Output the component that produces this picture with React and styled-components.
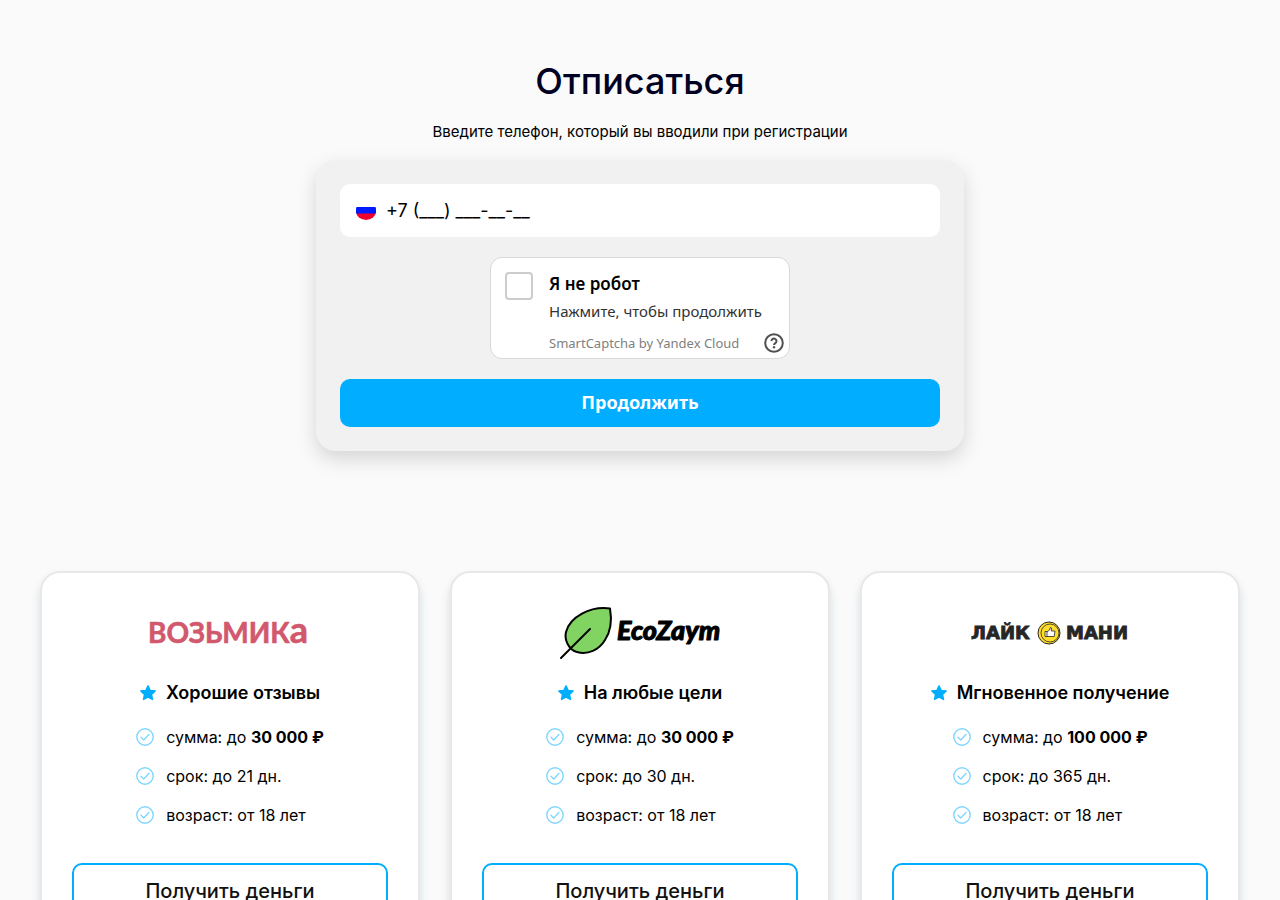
import React from 'react';
import styled, { createGlobalStyle } from 'styled-components';

const GlobalStyle = createGlobalStyle`
  * {
    box-sizing: border-box;
  }
  body {
    margin: 0;
    background: #fafafa;
    color: #000;
    font-family: Inter, "Liberation Sans", sans-serif;
  }
`;

const Page = styled.main`
  display: flex;
  flex-direction: column;
  align-items: center;
  padding: 56px 40px;
`;
const Title = styled.h1`
  margin: 0;
  font-size: 36px;
  line-height: 50px;
  font-weight: 500;
  color: #000022;
`;
const Subtitle = styled.p`
  margin: 16px 0 18px;
  font-size: 15px;
  line-height: 20px;
`;
const Form = styled.form`
  display: flex;
  flex-direction: column;
  align-items: center;
  gap: 20px;
  width: 100%;
  max-width: 648px;
  padding: 24px;
  border-radius: 20px;
  background: #f1f1f1;
  box-shadow: 0 8px 20px rgba(0, 0, 0, 0.15);
`;
const PhoneField = styled.label`
  display: flex;
  align-items: center;
  gap: 10px;
  width: 100%;
  height: 53px;
  padding: 0 16px;
  border-radius: 10px;
  background: #fff;
`;
const PhoneInput = styled.input`
  flex: 1;
  min-width: 0;
  padding: 0;
  border: 0;
  outline: 0;
  background: transparent;
  color: #000;
  font: 400 18px/24px Inter, sans-serif;
`;
const Captcha = styled.div`
  display: flex;
  gap: 16px;
  width: 300px;
  height: 102px;
  padding: 14px 5px 5px 14px;
  border: 1px solid #d9d9d9;
  border-radius: 12px;
  background: #fff;
  font-family: "Noto Sans", sans-serif;
`;
const CaptchaCheck = styled.input`
  appearance: none;
  flex: none;
  width: 28px;
  height: 28px;
  margin: 0;
  border: 2px solid #ccc;
  border-radius: 4px;
  background: #fff;
`;
const CaptchaBody = styled.div`
  flex: 1;
  display: flex;
  flex-direction: column;
`;
const CaptchaLabel = styled.label`
  font-size: 17px;
  line-height: 24px;
  font-weight: 600;
`;
const CaptchaHint = styled.span`
  margin-top: 5px;
  font-size: 15px;
  line-height: 20px;
  color: #333;
`;
const CaptchaFooter = styled.div`
  display: flex;
  align-items: center;
  justify-content: space-between;
  margin-top: auto;
`;
const CaptchaLink = styled.a`
  font-size: 13px;
  line-height: 20px;
  color: #808080;
  text-decoration: none;
`;
const HelpButton = styled.button`
  display: flex;
  padding: 0;
  border: 0;
  background: none;
`;
const SubmitButton = styled.button`
  width: 100%;
  height: 48px;
  padding: 0 0 2px;
  border: 0;
  border-radius: 10px;
  background: #00adff;
  color: #fff;
  font: 700 18px/24px "Noto Sans", sans-serif;
`;
const Offers = styled.section`
  display: grid;
  grid-template-columns: repeat(3, 1fr);
  gap: 30px;
  width: 100%;
  max-width: 1200px;
  margin-top: 120px;
`;
const Card = styled.article`
  display: flex;
  flex-direction: column;
  align-items: center;
  padding: 30px;
  border: 2px solid #e8e8e8;
  border-radius: 20px;
  background: #fff;
  box-shadow: 0 6px 10px rgba(20, 80, 110, 0.16);
`;
const Logo = styled.svg`
  display: block;
  width: 160px;
  height: 60px;
  overflow: visible;
`;
const CardTitle = styled.h2`
  display: flex;
  align-items: center;
  gap: 10px;
  margin: 18px 0 20px;
  font-size: 18px;
  line-height: 24px;
  font-weight: 600;
`;
const Features = styled.ul`
  display: grid;
  gap: 15px;
  margin: 0 0 36px;
  padding: 0;
  list-style: none;
`;
const Feature = styled.li`
  display: flex;
  align-items: center;
  gap: 12px;
  font-size: 16px;
  line-height: 24px;
`;
const CardButton = styled.a`
  width: 100%;
  padding: 12px;
  border: 2px solid #00adff;
  border-radius: 10px;
  color: #111;
  font-size: 20px;
  line-height: 28px;
  font-weight: 500;
  text-align: center;
  text-decoration: none;
`;

const Flag = () => (
  <svg width="20" height="20" viewBox="0 0 20 20" aria-hidden="true">
    <clipPath id="flag">
      <ellipse cx="10" cy="9.5" rx="10.2" ry="9.5" />
    </clipPath>
    <g clipPath="url(#flag)">
      <path fill="#fff" d="M0 0h20v7H0z" />
      <path fill="#001aff" d="M0 6h20v7H0z" />
      <path fill="#f0002c" d="M0 12.500h20v7.500H0z" />
    </g>
  </svg>
);

const HelpIcon = () => (
  <svg width="20" height="20" viewBox="0 0 20 20" fill="none" stroke="#505050" strokeWidth="2">
    <circle cx="10" cy="10" r="8.8" />
    <path d="M7.500 8.100a2.500 2.500 0 1 1 3.900 2c-.9.6-1.400 1-1.400 2" />
    <circle cx="10" cy="14.300" r="1.200" fill="#505050" stroke="none" />
  </svg>
);

const Star = () => (
  <svg width="16" height="16" viewBox="0 0 16 16" aria-hidden="true">
    <path
      fill="#00adff"
      stroke="#00adff"
      strokeWidth="1.4"
      strokeLinejoin="round"
      d="M8 .9l2.100 4.500 5.100.6-3.700 3.400 1 5.100L8 12.100l-4.500 2.400 1-5.100L.8 6l5.100-.6z"
    />
  </svg>
);

const Check = () => (
  <svg width="18" height="18" viewBox="0 0 18 18" fill="none" stroke="#80d6ff" strokeWidth="1.4" aria-hidden="true">
    <circle cx="9" cy="9" r="8.2" />
    <path d="M5 9.300l2.700 2.600 5.200-5.400" strokeLinecap="round" strokeLinejoin="round" />
  </svg>
);

const VozmikaLogo = () => (
  <Logo viewBox="0 0 160 60" role="img" aria-label="Возьмика">
    <text
      x="-2"
      y="40"
      fill="#d1586d"
      stroke="#d1586d"
      strokeWidth=".6"
      fontFamily="Lato, sans-serif"
      fontSize="28"
      fontWeight="700"
    >
      ВОЗЬМИК<tspan fontSize="36">а</tspan>
    </text>
  </Logo>
);

const EcoZaymLogo = () => (
  <Logo viewBox="0 0 160 60" role="img" aria-label="EcoZaym">
    <path
      d="M50 5.500C30 3 10 14 6 29c-2 8 3 18 11 20 11 3 22-2 28-12 6-9 7-20 5-31.500z"
      fill="#82d462"
      stroke="#000"
      strokeWidth="2"
      strokeLinejoin="round"
    />
    <path d="M1 55l29-29" stroke="#000" strokeWidth="2" strokeLinecap="round" />
    <text
      x="57"
      y="37"
      stroke="#000"
      strokeWidth="1"
      strokeLinejoin="round"
      fontFamily="Lato, sans-serif"
      fontSize="27"
      fontWeight="900"
      fontStyle="italic"
    >
      EcoZaym
    </text>
  </Logo>
);

const LikeMoneyLogo = () => (
  <Logo viewBox="0 0 160 60" role="img" aria-label="Лайк Мани">
    <g
      fill="#262626"
      stroke="#262626"
      strokeWidth=".9"
      fontFamily="DejaVu Sans, sans-serif"
      fontSize="18"
      fontWeight="700"
    >
      <text x="1" y="36">ЛАЙК</text>
      <text x="96" y="36">МАНИ</text>
    </g>
    <circle cx="79" cy="30" r="11" fill="#ffdd2d" stroke="#262626" />
    <circle cx="80" cy="30" r="9" fill="#ffdd2d" stroke="#262626" strokeWidth=".8" />
    <path
      d="M75 28.500h2v5h-2zM77 29l2.500-2 .8-2.500 1.200.5-.2 3h3.700l-.8 5.500H77"
      fill="#fff"
      stroke="#262626"
      strokeWidth=".8"
      strokeLinejoin="round"
    />
  </Logo>
);

const offers = [
  { id: 'vozmika', Brand: VozmikaLogo, title: 'Хорошие отзывы', sum: '30 000 ₽', term: '21' },
  { id: 'ecozaym', Brand: EcoZaymLogo, title: 'На любые цели', sum: '30 000 ₽', term: '30' },
  { id: 'likemoney', Brand: LikeMoneyLogo, title: 'Мгновенное получение', sum: '100 000 ₽', term: '365' },
];

const OfferCard = ({ Brand, title, sum, term }) => (
  <Card>
    <Brand />
    <CardTitle><Star />{title}</CardTitle>
    <Features>
      <Feature><Check /><span>сумма: до <b>{sum}</b></span></Feature>
      <Feature><Check /><span>срок: до {term} дн.</span></Feature>
      <Feature><Check /><span>возраст: от 18 лет</span></Feature>
    </Features>
    <CardButton href="#">Получить деньги</CardButton>
  </Card>
);

const App = () => (
  <Page>
    <GlobalStyle />
    <Title>Отписаться</Title>
    <Subtitle>Введите телефон, который вы вводили при регистрации</Subtitle>
    <Form onSubmit={(e) => e.preventDefault()}>
      <PhoneField>
        <Flag />
        <PhoneInput type="tel" name="phone" aria-label="Телефон" defaultValue="+7 (___) ___-__-__" />
      </PhoneField>
      <Captcha>
        <CaptchaCheck type="checkbox" id="robot" />
        <CaptchaBody>
          <CaptchaLabel htmlFor="robot">Я не робот</CaptchaLabel>
          <CaptchaHint>Нажмите, чтобы продолжить</CaptchaHint>
          <CaptchaFooter>
            <CaptchaLink href="#">SmartCaptcha by Yandex Cloud</CaptchaLink>
            <HelpButton type="button" aria-label="Помощь"><HelpIcon /></HelpButton>
          </CaptchaFooter>
        </CaptchaBody>
      </Captcha>
      <SubmitButton type="submit">Продолжить</SubmitButton>
    </Form>
    <Offers>
      {offers.map((offer) => <OfferCard key={offer.id} {...offer} />)}
    </Offers>
  </Page>
);

export default App;
